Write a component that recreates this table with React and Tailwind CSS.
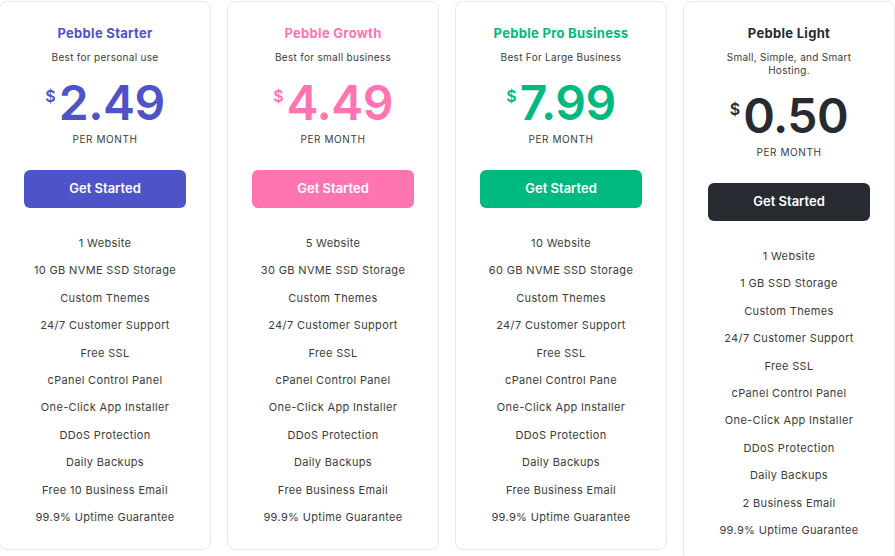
import React from "react";

const PLANS = [
  {
    name: "Pebble Starter",
    tagline: "Best for personal use",
    price: "2.49",
    color: "text-[#4f53c8]",
    btn: "bg-[#4f53c8]",
    features: [
      "1 Website",
      "10 GB NVME SSD Storage",
      "Custom Themes",
      "24/7 Customer Support",
      "Free SSL",
      "cPanel Control Panel",
      "One-Click App Installer",
      "DDoS Protection",
      "Daily Backups",
      "Free 10 Business Email",
      "99.9% Uptime Guarantee",
    ],
  },
  {
    name: "Pebble Growth",
    tagline: "Best for small business",
    price: "4.49",
    color: "text-[#ff74b1]",
    btn: "bg-[#ff74b1]",
    features: [
      "5 Website",
      "30 GB NVME SSD Storage",
      "Custom Themes",
      "24/7 Customer Support",
      "Free SSL",
      "cPanel Control Panel",
      "One-Click App Installer",
      "DDoS Protection",
      "Daily Backups",
      "Free Business Email",
      "99.9% Uptime Guarantee",
    ],
  },
  {
    name: "Pebble Pro Business",
    tagline: "Best For Large Business",
    price: "7.99",
    color: "text-[#00b97f]",
    btn: "bg-[#00b97f]",
    features: [
      "10 Website",
      "60 GB NVME SSD Storage",
      "Custom Themes",
      "24/7 Customer Support",
      "Free SSL",
      "cPanel Control Pane",
      "One-Click App Installer",
      "DDoS Protection",
      "Daily Backups",
      "Free Business Email",
      "99.9% Uptime Guarantee",
    ],
  },
  {
    name: "Pebble Light",
    tagline: "Small, Simple, and Smart Hosting.",
    price: "0.50",
    color: "text-[#272a30]",
    btn: "bg-[#272a30]",
    features: [
      "1 Website",
      "1 GB SSD Storage",
      "Custom Themes",
      "24/7 Customer Support",
      "Free SSL",
      "cPanel Control Panel",
      "One-Click App Installer",
      "DDoS Protection",
      "Daily Backups",
      "2 Business Email",
      "99.9% Uptime Guarantee",
    ],
  },
];

function PlanCard({ plan }) {
  return (
    <div className="w-[212px] shrink-0 self-start flex flex-col items-center bg-white border border-[#e8e8ea] rounded-lg pt-[22px] pb-[18px]">
      <div className={`text-[13px] leading-[18px] font-bold tracking-[0.3px] ${plan.color}`}>
        {plan.name}
      </div>
      <div className="mt-[9px] px-10 text-center text-[10px] leading-[13px] tracking-[0.3px] text-[#3b3b3b]">
        {plan.tagline}
      </div>
      <div className={`mt-[15px] flex items-start ${plan.color}`}>
        <span className="text-[16px] leading-[16px] font-semibold mt-[9px] mr-[3px]">
          $
        </span>
        <span className="text-[48px] leading-[48px] font-semibold tracking-[-0.5px]">
          {plan.price}
        </span>
      </div>
      <div className="mt-[6px] text-[10px] leading-[13px] text-[#3b3b3b] uppercase tracking-[0.6px]">
        Per Month
      </div>
      <button
        className={`mt-[24px] w-[162px] h-[38px] rounded-md text-white text-[13px] font-semibold ${plan.btn}`}
      >
        Get Started
      </button>
      <ul className="mt-[22px] flex flex-col items-center text-[11px] leading-[27.4px] tracking-[0.35px] text-[#3b3b3b]">
        {plan.features.map((f) => (
          <li key={f}>{f}</li>
        ))}
      </ul>
    </div>
  );
}

export default function App() {
  return (
    <div
      className="w-[895px] h-[556px] overflow-hidden bg-white pt-px"
      style={{ fontFamily: "Inter, 'Noto Sans', sans-serif" }}
    >
      <div className="flex gap-4 -ml-px">
        {PLANS.map((p) => (
          <PlanCard key={p.name} plan={p} />
        ))}
      </div>
    </div>
  );
}
